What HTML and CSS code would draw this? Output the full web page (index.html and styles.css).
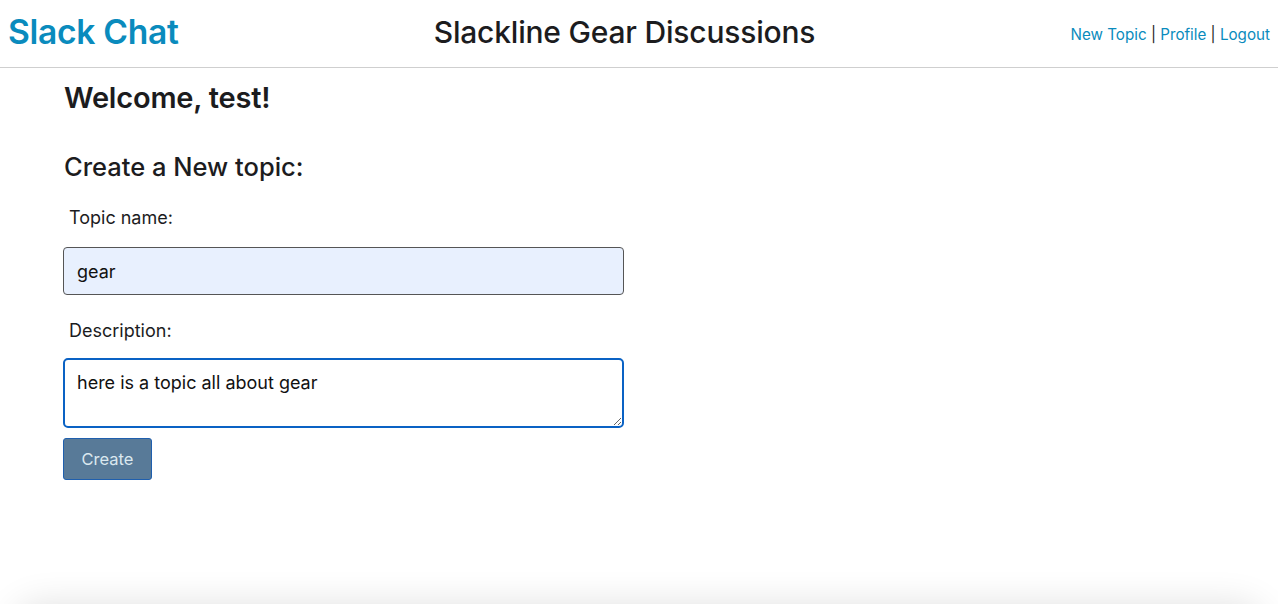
FILE: index.html
```html
<!DOCTYPE html>
<html lang="en">
<head>
<meta charset="utf-8">
<title>Slackline Gear Discussions</title>
<link rel="stylesheet" href="styles.css">
</head>
<body>
<header class="topbar">
  <a class="brand" href="#">Slack Chat</a>
  <h1 class="page-title">Slackline Gear Discussions</h1>
  <nav class="nav">
    <a href="#">New Topic</a> | <a href="#">Profile</a> | <a href="#">Logout</a>
  </nav>
</header>
<main class="content">
  <h2 class="welcome">Welcome, test!</h2>
  <h3 class="section-title">Create a New topic:</h3>
  <form class="topic-form">
    <label class="field-label" for="name">Topic name:</label>
    <input class="text-input" id="name" type="text" value="gear">
    <label class="field-label" for="desc">Description:</label>
    <textarea class="text-area" id="desc">here is a topic all about gear</textarea>
    <button class="btn-create" type="button">Create</button>
  </form>
</main>
<div class="bottom-shadow"></div>
</body>
</html>
```
FILE: styles.css
```css
html, body {
  margin: 0;
  padding: 0;
  background: #fff;
}
body {
  font-family: Inter, "Helvetica Neue", Arial, sans-serif;
  color: #1c1c1e;
  overflow: hidden;
  height: 604px;
}
.topbar {
  display: flex;
  justify-content: space-between;
  align-items: center;
  height: 68px;
  padding: 0 8px 0 8px;
  border-bottom: 1px solid #cfcfcf;
  box-sizing: border-box;
}
.brand {
  font-size: 33.6px;
  font-weight: 600;
  color: #0a8bbd;
  text-decoration: none;
  letter-spacing: -0.3px;
  margin-top: -5px;
}
.page-title {
  margin: 0;
  font-size: 30px;
  font-weight: 500;
  color: #1c1c1e;
  letter-spacing: -0.2px;
  margin-top: -4px;
}
.nav {
  font-size: 15.2px;
  color: #222;
  margin-top: 1px;
}
.nav a {
  color: #0a8bbd;
  text-decoration: none;
}
.content {
  padding: 0 0 0 64px;
}
.welcome {
  margin: 13px 0 0 0;
  font-size: 29px;
  font-weight: 600;
  line-height: 34px;
  letter-spacing: -0.2px;
}
.section-title {
  margin: 37px 0 0 0;
  font-size: 25.5px;
  font-weight: 500;
  line-height: 30px;
}
.topic-form {
  display: flex;
  flex-direction: column;
  align-items: flex-start;
  width: 561px;
}
.field-label {
  font-size: 18px;
  margin: 25px 0 0 5px;
  line-height: 22px;
}
.text-input {
  box-sizing: border-box;
  width: 561px;
  height: 48px;
  margin-top: 18px;
  margin-left: -1px;
  padding: 0 13px;
  font-family: inherit;
  font-size: 18px;
  color: #111;
  background: #e8f0fe;
  border: 1px solid #555;
  border-radius: 4px;
  outline: none;
}
.text-area {
  box-sizing: border-box;
  width: 561px;
  height: 70px;
  margin-top: 16px;
  margin-left: -1px;
  padding: 11px 12px;
  font-family: inherit;
  font-size: 18px;
  line-height: 24px;
  color: #111;
  background: #fff;
  border: 2px solid #0a62c4;
  border-radius: 5px;
  outline: none;
  resize: vertical;
}
.btn-create {
  margin-top: 10px;
  margin-left: -1px;
  width: 89px;
  height: 42px;
  font-family: inherit;
  font-size: 16.5px;
  color: #dbe8ef;
  background: #587a98;
  border: 1px solid #1f5fae;
  border-radius: 3px;
}
.bottom-shadow {
  position: fixed;
  left: 20px;
  right: 20px;
  top: 610px;
  height: 40px;
  border-radius: 20px;
  box-shadow: 0 0 36px 6px rgba(0, 0, 0, 0.12);
}
```
